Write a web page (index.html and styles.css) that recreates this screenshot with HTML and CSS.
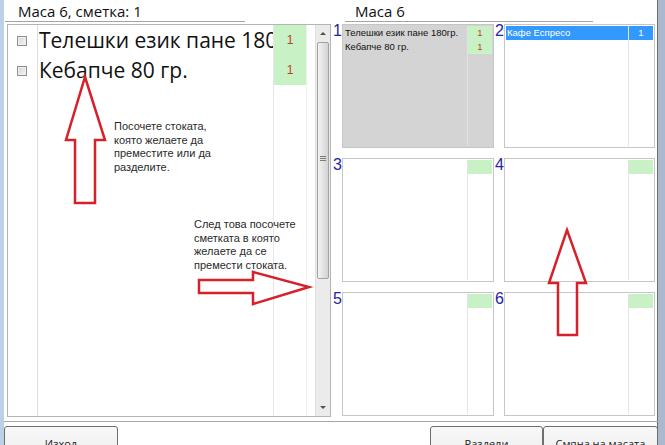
FILE: index.html
```html
<!DOCTYPE html>
<html lang="bg">
<head>
<meta charset="utf-8">
<title>Маса 6</title>
<link rel="stylesheet" href="styles.css">
</head>
<body>
<div class="screen">
  <div class="app">
    <div class="main">
      <section class="left">
        <div class="head head-left">Маса 6, сметка: 1</div>
        <div class="listbox">
          <div class="col-check">
            <div class="row check-row"><span class="cb"></span></div>
            <div class="row check-row"><span class="cb"></span></div>
          </div>
          <div class="col-name">
            <div class="row name-row">Телешки език пане 180гр.</div>
            <div class="row name-row">Кебапче 80 гр.</div>
          </div>
          <div class="col-qty">
            <div class="row qty-row">1</div>
            <div class="row qty-row">1</div>
          </div>
          <div class="list-gap"></div>
          <div class="scrollbar">
            <div class="sb-btn"><span class="tri-up"></span></div>
            <div class="sb-track"><div class="sb-thumb"><span class="grip"></span></div></div>
            <div class="sb-btn"><span class="tri-down"></span></div>
          </div>
        </div>
      </section>
      <section class="right">
        <div class="head head-right">Маса 6</div>
        <div class="grid">
          <div class="cell">
            <span class="num">1</span>
            <div class="panel busy">
              <div class="p-name">
                <div class="prow">Телешки език пане 180гр.</div>
                <div class="prow">Кебапче 80 гр.</div>
              </div>
              <div class="p-qty">
                <div class="prow green">1</div>
                <div class="prow green">1</div>
              </div>
            </div>
          </div>
          <div class="cell">
            <span class="num">2</span>
            <div class="panel">
              <div class="p-name">
                <div class="prow sel">Кафе Еспресо</div>
              </div>
              <div class="p-qty">
                <div class="prow sel">1</div>
              </div>
            </div>
          </div>
          <div class="cell">
            <span class="num">3</span>
            <div class="panel">
              <div class="p-name"></div>
              <div class="p-qty"><div class="prow green"></div></div>
            </div>
          </div>
          <div class="cell">
            <span class="num">4</span>
            <div class="panel">
              <div class="p-name"></div>
              <div class="p-qty"><div class="prow green"></div></div>
            </div>
          </div>
          <div class="cell">
            <span class="num">5</span>
            <div class="panel">
              <div class="p-name"></div>
              <div class="p-qty"><div class="prow green"></div></div>
            </div>
          </div>
          <div class="cell">
            <span class="num">6</span>
            <div class="panel">
              <div class="p-name"></div>
              <div class="p-qty"><div class="prow green"></div></div>
            </div>
          </div>
        </div>
      </section>
    </div>
    <footer class="footer">
      <button class="btn btn-exit">Изход</button>
      <span class="spacer"></span>
      <button class="btn btn-split">Раздели</button>
      <button class="btn btn-move">Смяна на масата</button>
    </footer>
  </div>

  <p class="note note-1">Посочете стоката,<br>която желаете да<br>преместите или да<br>разделите.</p>
  <p class="note note-2">След това посочете<br>сметката в която<br>желаете да се<br>премести стоката.</p>

  <svg class="arrows" width="665" height="445" viewBox="0 0 665 445" aria-hidden="true">
    <polygon points="85,77 105,140 95,140 95,203 75,203 75,140 66,140"/>
    <polygon points="199,280 253,280 253,272 309,287 253,304 253,293 199,293"/>
    <polygon points="567,230 586,283 577,283 577,335 558,335 558,283 549,283"/>
  </svg>
</div>
</body>
</html>
```

FILE: styles.css
```css
* { box-sizing: border-box; }

html, body {
  margin: 0;
  padding: 0;
}

body {
  width: 665px;
  height: 445px;
  overflow: hidden;
  background: #ffffff;
  font-family: "Open Sans", "Noto Sans", sans-serif;
  color: #111111;
}

.screen {
  position: relative;
  width: 665px;
  height: 445px;
  overflow: hidden;
}

.app {
  height: 445px;
  display: flex;
  flex-direction: column;
  border-left: 4px solid #bfd0e4;
  border-right: 7px solid #aab9cb;
  box-shadow: inset -1px 0 0 #6e6e6e;
  background: #ffffff;
}

.main {
  height: 421px;
  flex: none;
  display: flex;
  padding-left: 3px;
}

/* headers */
.head {
  height: 22px;
  margin-bottom: 2px;
  border-bottom: 1px solid #a3a3a3;
  font-size: 15px;
  line-height: 20px;
  padding-top: 1px;
  color: #111111;
  white-space: nowrap;
}

.head-left {
  margin-left: -2px;
  width: 240px;
  padding-left: 13px;
}

.head-right {
  margin-left: 13px;
  width: 248px;
  padding-left: 10px;
}

/* left list */
.left {
  width: 324px;
  display: flex;
  flex-direction: column;
}

.listbox {
  height: 393px;
  border: 1px solid #b4b4b4;
  display: flex;
}

.row {
  height: 30px;
}

.col-check {
  width: 30px;
  border-right: 1px solid #dedede;
}

.check-row {
  display: flex;
  align-items: center;
  padding-left: 9px;
  padding-top: 2px;
}

.cb {
  width: 10px;
  height: 10px;
  border: 1px solid #8f8f8f;
  background: linear-gradient(135deg, #d6d6d6, #f5f5f5);
  box-shadow: inset 0 0 0 1px #eeeeee;
}

.col-name {
  flex: 1;
  min-width: 0;
  overflow: hidden;
  white-space: nowrap;
  font-size: 21px;
  color: #111111;
}

.name-row {
  line-height: 31px;
  padding-left: 1px;
}

.col-qty {
  width: 34px;
  border-left: 1px solid #e6e6e6;
  border-right: 1px solid #f0f0f0;
}

.qty-row {
  background: #c8f2c6;
  color: #c0392b;
  font-family: "Liberation Sans", Arial, sans-serif;
  font-size: 12px;
  line-height: 30px;
  text-align: center;
}

.list-gap {
  width: 8px;
}

.scrollbar {
  width: 15px;
  display: flex;
  flex-direction: column;
  background: #ebebeb;
  border-left: 1px solid #e0e0e0;
}

.sb-btn {
  height: 17px;
  display: flex;
  align-items: center;
  justify-content: center;
}

.tri-up {
  width: 0;
  height: 0;
  border-left: 3px solid transparent;
  border-right: 3px solid transparent;
  border-bottom: 3px solid #505050;
}

.tri-down {
  width: 0;
  height: 0;
  border-left: 3px solid transparent;
  border-right: 3px solid transparent;
  border-top: 3px solid #505050;
}

.sb-track {
  flex: 1;
  padding: 0 1px;
}

.sb-thumb {
  height: 237px;
  border: 1px solid #a2a2a2;
  border-radius: 2px;
  background: linear-gradient(90deg, #f2f2f2, #e3e3e3 50%, #d3d3d3);
  display: flex;
  justify-content: center;
  padding-top: 113px;
}

.grip {
  width: 6px;
  height: 5px;
  border-top: 1px solid #7a7a7a;
  border-bottom: 1px solid #7a7a7a;
  background: linear-gradient(#7a7a7a, #7a7a7a) center / 6px 1px no-repeat;
}

/* right grid */
.right {
  flex: 1;
  margin-left: 1px;
  display: flex;
  flex-direction: column;
}

.grid {
  display: grid;
  grid-template-columns: 162px 161px;
  grid-template-rows: repeat(3, 124px);
  row-gap: 10px;
}

.cell {
  display: flex;
}

.num {
  width: 10px;
  flex: none;
  padding-left: 1px;
  font-family: "Liberation Sans", Arial, sans-serif;
  font-size: 16px;
  line-height: 14px;
  color: #2525a5;
}

.panel {
  flex: 1;
  display: flex;
  border: 1px solid #c6c6c6;
  padding: 1px;
  background: #ffffff;
}

.panel.busy {
  background: #d4d4d4;
}

.p-name {
  flex: 1;
  min-width: 0;
  overflow: hidden;
  white-space: nowrap;
}

.p-qty {
  width: 25px;
  border-left: 1px solid #e3e3e3;
}

.prow {
  height: 14px;
  line-height: 14px;
  font-family: "Liberation Sans", Arial, sans-serif;
  font-size: 9.5px;
  padding-left: 1px;
  color: #111111;
}

.p-qty .prow {
  text-align: center;
  padding-left: 0;
  color: #c0392b;
}

.prow.green {
  background: #c8f2c6;
}

.prow.sel,
.p-qty .prow.sel {
  background: #3399ff;
  color: #ffffff;
}

/* footer */
.footer {
  flex: none;
  height: 24px;
  display: flex;
  align-items: flex-start;
  border-top: 1px solid #a6a6a6;
  padding-top: 4px;
}

.spacer {
  flex: 1;
}

.btn {
  height: 35px;
  flex: none;
  border: 1px solid #6f6f6f;
  border-radius: 3px;
  background: linear-gradient(#f8f8f8, #ececec);
  font-family: "Open Sans", "Noto Sans", sans-serif;
  font-size: 11px;
  color: #222222;
  padding: 0;
}

.btn-exit { width: 114px; }
.btn-split { width: 113px; }
.btn-move { width: 115px; }

/* annotations drawn over the screenshot */
.note {
  position: absolute;
  margin: 0;
  font-family: "Liberation Sans", Arial, sans-serif;
  font-size: 11px;
  line-height: 13.5px;
  color: #2a2a2a;
}

.note-1 { left: 114px; top: 120px; }
.note-2 { left: 194px; top: 218px; }

.arrows {
  position: absolute;
  left: 0;
  top: 0;
  pointer-events: none;
}

.arrows polygon {
  fill: none;
  stroke: #d6202a;
  stroke-width: 2.5;
  stroke-linejoin: miter;
}
```
